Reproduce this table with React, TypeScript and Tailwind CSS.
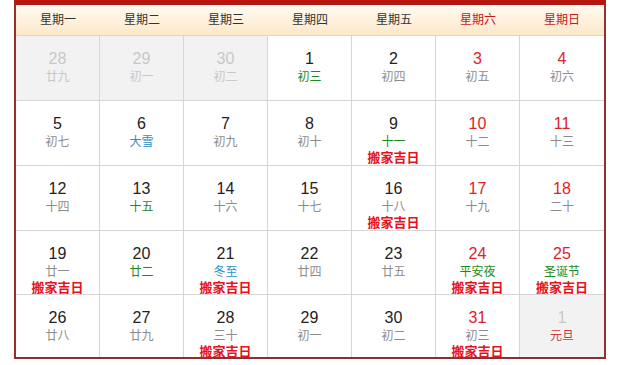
import React from 'react'

type Day = {
  day: number
  lunar: string
  tone?: 'gray' | 'green' | 'blue' | 'red'
  move?: boolean
  other?: boolean
}

const weekNames = ['星期一', '星期二', '星期三', '星期四', '星期五', '星期六', '星期日']

const days: Day[] = [
  { day: 28, lunar: '廿九', other: true },
  { day: 29, lunar: '初一', other: true },
  { day: 30, lunar: '初二', other: true },
  { day: 1, lunar: '初三', tone: 'green' },
  { day: 2, lunar: '初四' },
  { day: 3, lunar: '初五' },
  { day: 4, lunar: '初六' },
  { day: 5, lunar: '初七' },
  { day: 6, lunar: '大雪', tone: 'blue' },
  { day: 7, lunar: '初九' },
  { day: 8, lunar: '初十' },
  { day: 9, lunar: '十一', tone: 'green', move: true },
  { day: 10, lunar: '十二' },
  { day: 11, lunar: '十三' },
  { day: 12, lunar: '十四' },
  { day: 13, lunar: '十五', tone: 'green' },
  { day: 14, lunar: '十六' },
  { day: 15, lunar: '十七' },
  { day: 16, lunar: '十八', move: true },
  { day: 17, lunar: '十九' },
  { day: 18, lunar: '二十' },
  { day: 19, lunar: '廿一', move: true },
  { day: 20, lunar: '廿二', tone: 'green' },
  { day: 21, lunar: '冬至', tone: 'blue', move: true },
  { day: 22, lunar: '廿四' },
  { day: 23, lunar: '廿五' },
  { day: 24, lunar: '平安夜', tone: 'green', move: true },
  { day: 25, lunar: '圣诞节', tone: 'green', move: true },
  { day: 26, lunar: '廿八' },
  { day: 27, lunar: '廿九' },
  { day: 28, lunar: '三十', move: true },
  { day: 29, lunar: '初一' },
  { day: 30, lunar: '初二' },
  { day: 31, lunar: '初三', move: true },
  { day: 1, lunar: '元旦', tone: 'red', other: true },
]

const rowHeights = ['h-[65px]', 'h-[65px]', 'h-[65px]', 'h-[64px]', 'h-[62px]']

const lunarColor = (d: Day) => {
  if (d.tone === 'red') return 'text-[#d0393f]'
  if (d.other) return 'text-[#c8c8c8]'
  if (d.tone === 'green') return 'text-[#1f8a24]'
  if (d.tone === 'blue') return 'text-[#2d8fc4]'
  return 'text-[#8c8c8c]'
}

export default function App() {
  return (
    <div className="min-h-screen bg-white font-['Liberation_Sans','Noto_Sans_CJK_SC',sans-serif]">
      <div className="ml-[14px] w-[592px] border-t-[5px] border-x-2 border-b-2 border-t-[#b5160f] border-x-[#9a2d2d] border-b-[#8e2e2e]">
        <div className="grid grid-cols-7 h-[31px] border-b border-[#e3d6bf] bg-gradient-to-b from-[#fffaf1] to-[#fde8c9]">
          {weekNames.map((name, i) => (
            <div
              key={name}
              className={`flex items-center justify-center text-[12px] ${
                i >= 5 ? 'text-[#c8161e]' : 'text-[#333]'
              }`}
            >
              {name}
            </div>
          ))}
        </div>
        <div className="grid grid-cols-7">
          {days.map((d, idx) => {
            const col = idx % 7
            const row = Math.floor(idx / 7)
            const weekend = col >= 5
            return (
              <div
                key={idx}
                className={`flex flex-col items-center pt-[14px] ${rowHeights[row]} ${
                  col < 6 ? 'border-r border-[#d6d6d6]' : ''
                } ${row < 4 ? 'border-b border-[#d6d6d6]' : ''} ${
                  d.other ? 'bg-[#f2f2f2]' : 'bg-white'
                }`}
              >
                <span
                  className={`text-[16px] leading-[18px] ${
                    d.other ? 'text-[#c8c8c8]' : weekend ? 'text-[#e0212b]' : 'text-[#222]'
                  }`}
                >
                  {d.day}
                </span>
                <span className={`text-[12px] leading-[18px] ${lunarColor(d)}`}>{d.lunar}</span>
                {d.move && (
                  <span className="text-[13px] leading-[14px] font-bold text-[#e8121c]">
                    搬家吉日
                  </span>
                )}
              </div>
            )
          })}
        </div>
      </div>
    </div>
  )
}
